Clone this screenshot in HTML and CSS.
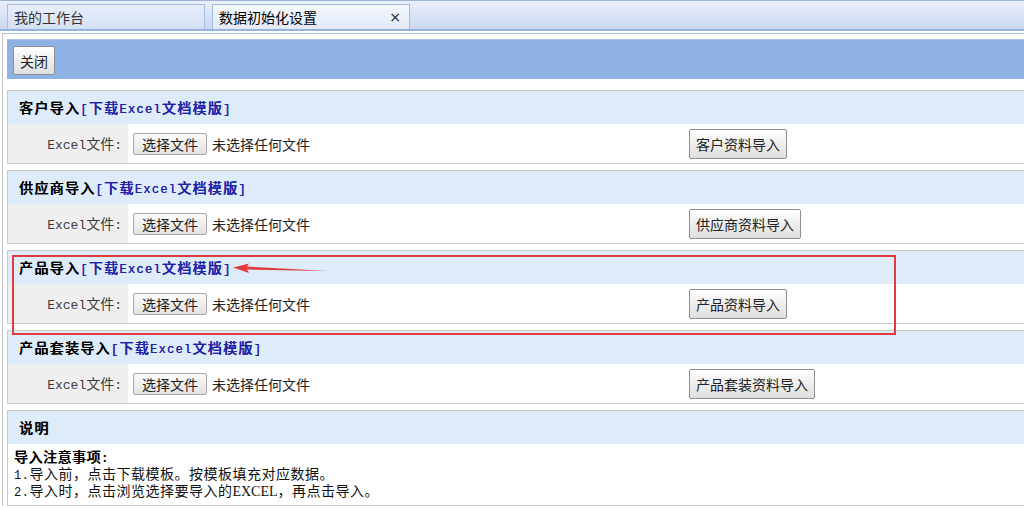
FILE: index.html
```html
<!DOCTYPE html>
<html lang="zh-CN">
<head>
<meta charset="utf-8">
<title>数据初始化设置</title>
<link rel="stylesheet" href="styles.css">
</head>
<body>
<div class="tabbar">
  <div class="tab"><span class="tab-title">我的工作台</span></div>
  <div class="tab active"><span class="tab-title">数据初始化设置</span><span class="tab-close">×</span></div>
</div>
<div class="main">
  <div class="toolbar"><button class="btn">关闭</button></div>

  <section class="panel">
    <div class="phead">客户导入<a class="dl"><span class="en">[</span>下载<span class="en">Excel</span>文档模版<span class="en">]</span></a></div>
    <div class="prow">
      <div class="lbl"><span class="en">Excel</span>文件<span class="en">:</span></div>
      <div class="file"><span class="fbtn">选择文件</span><span class="fname">未选择任何文件</span></div>
      <div class="act"><button class="btn">客户资料导入</button></div>
    </div>
  </section>

  <section class="panel">
    <div class="phead">供应商导入<a class="dl"><span class="en">[</span>下载<span class="en">Excel</span>文档模版<span class="en">]</span></a></div>
    <div class="prow">
      <div class="lbl"><span class="en">Excel</span>文件<span class="en">:</span></div>
      <div class="file"><span class="fbtn">选择文件</span><span class="fname">未选择任何文件</span></div>
      <div class="act"><button class="btn">供应商资料导入</button></div>
    </div>
  </section>

  <section class="panel">
    <div class="phead">产品导入<a class="dl"><span class="en">[</span>下载<span class="en">Excel</span>文档模版<span class="en">]</span></a></div>
    <div class="prow">
      <div class="lbl"><span class="en">Excel</span>文件<span class="en">:</span></div>
      <div class="file"><span class="fbtn">选择文件</span><span class="fname">未选择任何文件</span></div>
      <div class="act"><button class="btn">产品资料导入</button></div>
    </div>
  </section>

  <section class="panel">
    <div class="phead">产品套装导入<a class="dl"><span class="en">[</span>下载<span class="en">Excel</span>文档模版<span class="en">]</span></a></div>
    <div class="prow">
      <div class="lbl"><span class="en">Excel</span>文件<span class="en">:</span></div>
      <div class="file"><span class="fbtn">选择文件</span><span class="fname">未选择任何文件</span></div>
      <div class="act"><button class="btn">产品套装资料导入</button></div>
    </div>
  </section>

  <section class="panel">
    <div class="phead">说明</div>
    <div class="pbody">
      <div class="note note-title">导入注意事项<span class="en">:</span></div>
      <div class="note"><span class="en">1.</span>导入前，点击下载模板。按模板填充对应数据。</div>
      <div class="note"><span class="en">2.</span>导入时，点击浏览选择要导入的<span class="serif">EXCEL</span>，再点击导入。</div>
    </div>
  </section>
</div>

<div class="annot-box"></div>
<svg class="annot-arrow" width="100" height="20" viewBox="0 0 100 20">
  <polygon points="3,9.5 19,5.5 17,8.5 98,13 17,11.5 19,15" fill="#e23b3b"/>
</svg>
</body>
</html>
```

FILE: styles.css
```css
html, body {
  margin: 0;
  padding: 0;
  overflow: hidden;
  background: #fff;
}
body {
  position: relative;
  width: 1024px;
  height: 509px;
  font-family: "Noto Sans CJK SC", sans-serif;
  font-size: 14px;
  color: #222;
}

/* tabs */
.tabbar {
  height: 25px;
  padding: 3px 0 0 7px;
  border-top: 1px solid #9bb4d8;
  border-bottom: 2px solid #95b3dd;
  background: linear-gradient(#ebeffa, #c9d7ee);
  display: flex;
  gap: 7px;
  margin-bottom: 2px;
}
.tab {
  box-sizing: border-box;
  width: 198px;
  height: 25px;
  border: 1px solid #9fbde6;
  border-bottom: none;
  background: linear-gradient(#e9eefa, #d3e0f3);
  display: flex;
  align-items: center;
  padding-left: 6px;
  padding-right: 8px;
  color: #333;
  font-size: 14px;
}
.tab.active {
  background: linear-gradient(#f5f8fd, #e2eaf7);
  color: #000;
}
.tab-title { flex: 1; }
.tab-close {
  font-family: "DejaVu Sans", sans-serif;
  font-size: 14px;
  color: #222;
}

/* main area */
.main {
  width: 1040px;
  margin-left: 2px;
  border-top: 1px solid #a9c0e0;
  border-left: 1px solid #c2c2c2;
  padding: 5px 0 0 4px;
}
.toolbar {
  height: 40px;
  background: #8db2e3;
  border-top: 1px solid #a7c3ea;
  box-sizing: border-box;
  padding: 6px 0 0 6px;
  margin-bottom: 11px;
}
.btn {
  box-sizing: border-box;
  height: 30px;
  padding: 0 6px;
  border: 1px solid #8f8f8f;
  border-radius: 2px;
  background: linear-gradient(#ffffff, #dedede);
  font-family: "Noto Sans CJK SC", sans-serif;
  font-size: 14px;
  color: #222;
  line-height: 26px;
}
.toolbar .btn { height: 29px; }

/* panels */
.panel {
  border: 1px solid #c9c9c9;
  margin-bottom: 6px;
}
.phead {
  height: 33px;
  line-height: 33px;
  background: #deebf8;
  padding-left: 11px;
  font-weight: 500;
  letter-spacing: 1.3px;
  color: #000;
  text-shadow: 0.35px 0 0 currentColor;
}
.dl {
  color: #2323a8;
}
.en {
  font-family: "Liberation Mono", monospace;
  font-size: 12px;
}
.prow {
  height: 39px;
  display: flex;
  align-items: center;
}
.lbl {
  box-sizing: border-box;
  width: 120px;
  height: 100%;
  background: #efefef;
  text-align: right;
  padding-right: 6px;
  line-height: 39px;
  color: #3c3c3c;
}
.lbl .en { font-size: 13px; }
.file {
  width: 561px;
  display: flex;
  align-items: center;
  padding-left: 5px;
  box-sizing: border-box;
}
.fbtn {
  box-sizing: border-box;
  height: 22px;
  line-height: 20px;
  padding: 0 8px;
  border: 1px solid #a6a6a6;
  border-radius: 2px;
  background: linear-gradient(#fbfbfb, #e2e2e2);
  color: #222;
}
.fname {
  margin-left: 5px;
  color: #222;
}
.act .btn { margin-top: 1px; }

.pbody {
  height: 61px;
  padding: 4px 0 0 6px;
  box-sizing: border-box;
  letter-spacing: 0.5px;
  color: #111;
}
.note {
  height: 17px;
  line-height: 17px;
  white-space: nowrap;
}
.note-title {
  font-weight: 500;
  text-shadow: 0.35px 0 0 currentColor;
  color: #000;
}
.serif {
  font-family: "Liberation Serif", serif;
  letter-spacing: 0;
}

/* annotation overlay */
.annot-box {
  position: absolute;
  left: 12px;
  top: 255px;
  width: 880px;
  height: 76px;
  border: 2px solid #e0393e;
}
.annot-arrow {
  position: absolute;
  left: 230px;
  top: 258px;
}
```
